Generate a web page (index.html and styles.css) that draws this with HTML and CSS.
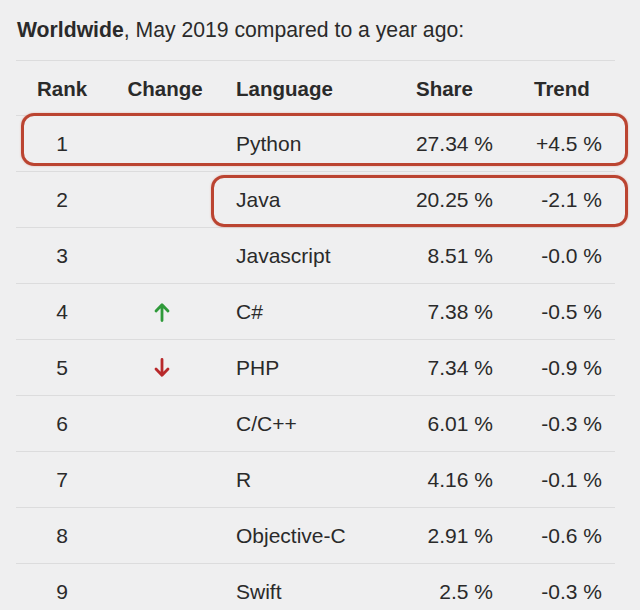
FILE: index.html
```html
<!DOCTYPE html>
<html>
<head>
<meta charset="utf-8">
<link rel="stylesheet" href="styles.css">
</head>
<body>
<div class="page">
  <p class="title"><b>Worldwide</b>, May 2019 compared to a year ago:</p>
  <div class="table-wrap">
    <div class="grid">
      <div class="row head">
        <div class="c rank">Rank</div>
        <div class="c change">Change</div>
        <div class="c lang">Language</div>
        <div class="c share">Share</div>
        <div class="c trend">Trend</div>
      </div>
      <div class="row">
        <div class="c rank">1</div><div class="c change"></div><div class="c lang">Python</div><div class="c share">27.34 %</div><div class="c trend">+4.5 %</div>
      </div>
      <div class="row">
        <div class="c rank">2</div><div class="c change"></div><div class="c lang">Java</div><div class="c share">20.25 %</div><div class="c trend">-2.1 %</div>
      </div>
      <div class="row">
        <div class="c rank">3</div><div class="c change"></div><div class="c lang">Javascript</div><div class="c share">8.51 %</div><div class="c trend">-0.0 %</div>
      </div>
      <div class="row">
        <div class="c rank">4</div>
        <div class="c change"><svg class="arrow up" width="16" height="20" viewBox="0 0 16 20"><path d="M8 18.5V3M2 9L8 2.8 14 9" fill="none" stroke="currentColor" stroke-width="2.8" stroke-linecap="round" stroke-linejoin="round"/></svg></div>
        <div class="c lang">C#</div><div class="c share">7.38 %</div><div class="c trend">-0.5 %</div>
      </div>
      <div class="row">
        <div class="c rank">5</div>
        <div class="c change"><svg class="arrow down" width="16" height="20" viewBox="0 0 16 20"><path d="M8 1.5V17M2 11l6 6.2 6-6.2" fill="none" stroke="currentColor" stroke-width="2.8" stroke-linecap="round" stroke-linejoin="round"/></svg></div>
        <div class="c lang">PHP</div><div class="c share">7.34 %</div><div class="c trend">-0.9 %</div>
      </div>
      <div class="row">
        <div class="c rank">6</div><div class="c change"></div><div class="c lang">C/C++</div><div class="c share">6.01 %</div><div class="c trend">-0.3 %</div>
      </div>
      <div class="row">
        <div class="c rank">7</div><div class="c change"></div><div class="c lang">R</div><div class="c share">4.16 %</div><div class="c trend">-0.1 %</div>
      </div>
      <div class="row">
        <div class="c rank">8</div><div class="c change"></div><div class="c lang">Objective-C</div><div class="c share">2.91 %</div><div class="c trend">-0.6 %</div>
      </div>
      <div class="row">
        <div class="c rank">9</div><div class="c change"></div><div class="c lang">Swift</div><div class="c share">2.5 %</div><div class="c trend">-0.3 %</div>
      </div>
    </div>
    <div class="mark mark-python"></div>
    <div class="mark mark-java"></div>
  </div>
</div>
</body>
</html>
```
FILE: styles.css
```css
html, body {
  margin: 0;
  padding: 0;
  background: #efeff0;
}
body {
  font-family: "Liberation Sans", Arial, sans-serif;
  color: #2a2a2a;
}
.page {
  padding: 0 25px 0 16px;
}
.title {
  margin: 0;
  padding: 18px 0 0 1px;
  font-size: 21.2px;
  line-height: 24px;
  height: 42px;
  box-sizing: border-box;
  white-space: nowrap;
}
.title b {
  font-weight: bold;
}
.table-wrap {
  position: relative;
  margin-top: 18px;
}
.grid {
  border-top: 1px solid #dcdcdd;
}
.row {
  display: grid;
  grid-template-columns: 92px 114px 1fr 106px 109px;
  height: 56px;
  box-sizing: border-box;
  border-bottom: 1px solid #dcdcdd;
  align-items: center;
  font-size: 21px;
}
.row.head {
  font-weight: bold;
  font-size: 20.5px;
  height: 55px;
  padding-top: 1px;
}
.c {
  line-height: 24px;
  white-space: nowrap;
}
.rank, .change {
  text-align: center;
}
.change {
  display: flex;
  justify-content: center;
  padding-right: 6px;
}
.lang {
  padding-left: 14px;
}
.share {
  text-align: right;
  padding-right: 13px;
}
.trend {
  text-align: right;
  padding-right: 13px;
}
.head .share {
  text-align: left;
  padding-left: 16px;
  padding-right: 0;
}
.head .trend {
  text-align: left;
  padding-left: 28px;
  padding-right: 0;
}
.head .change {
  padding-right: 0;
}
.arrow {
  display: block;
}
.arrow.up {
  color: #2f9a3a;
}
.arrow.down {
  color: #b8292b;
}
.mark {
  position: absolute;
  border: 3px solid #bb4431;
  border-radius: 13px;
  box-shadow: 0 0 2px rgba(220, 110, 90, 0.5);
}
.mark-python {
  left: 5px;
  top: 53px;
  width: 601px;
  height: 47px;
}
.mark-java {
  left: 195px;
  top: 115px;
  width: 411px;
  height: 46px;
}
```
